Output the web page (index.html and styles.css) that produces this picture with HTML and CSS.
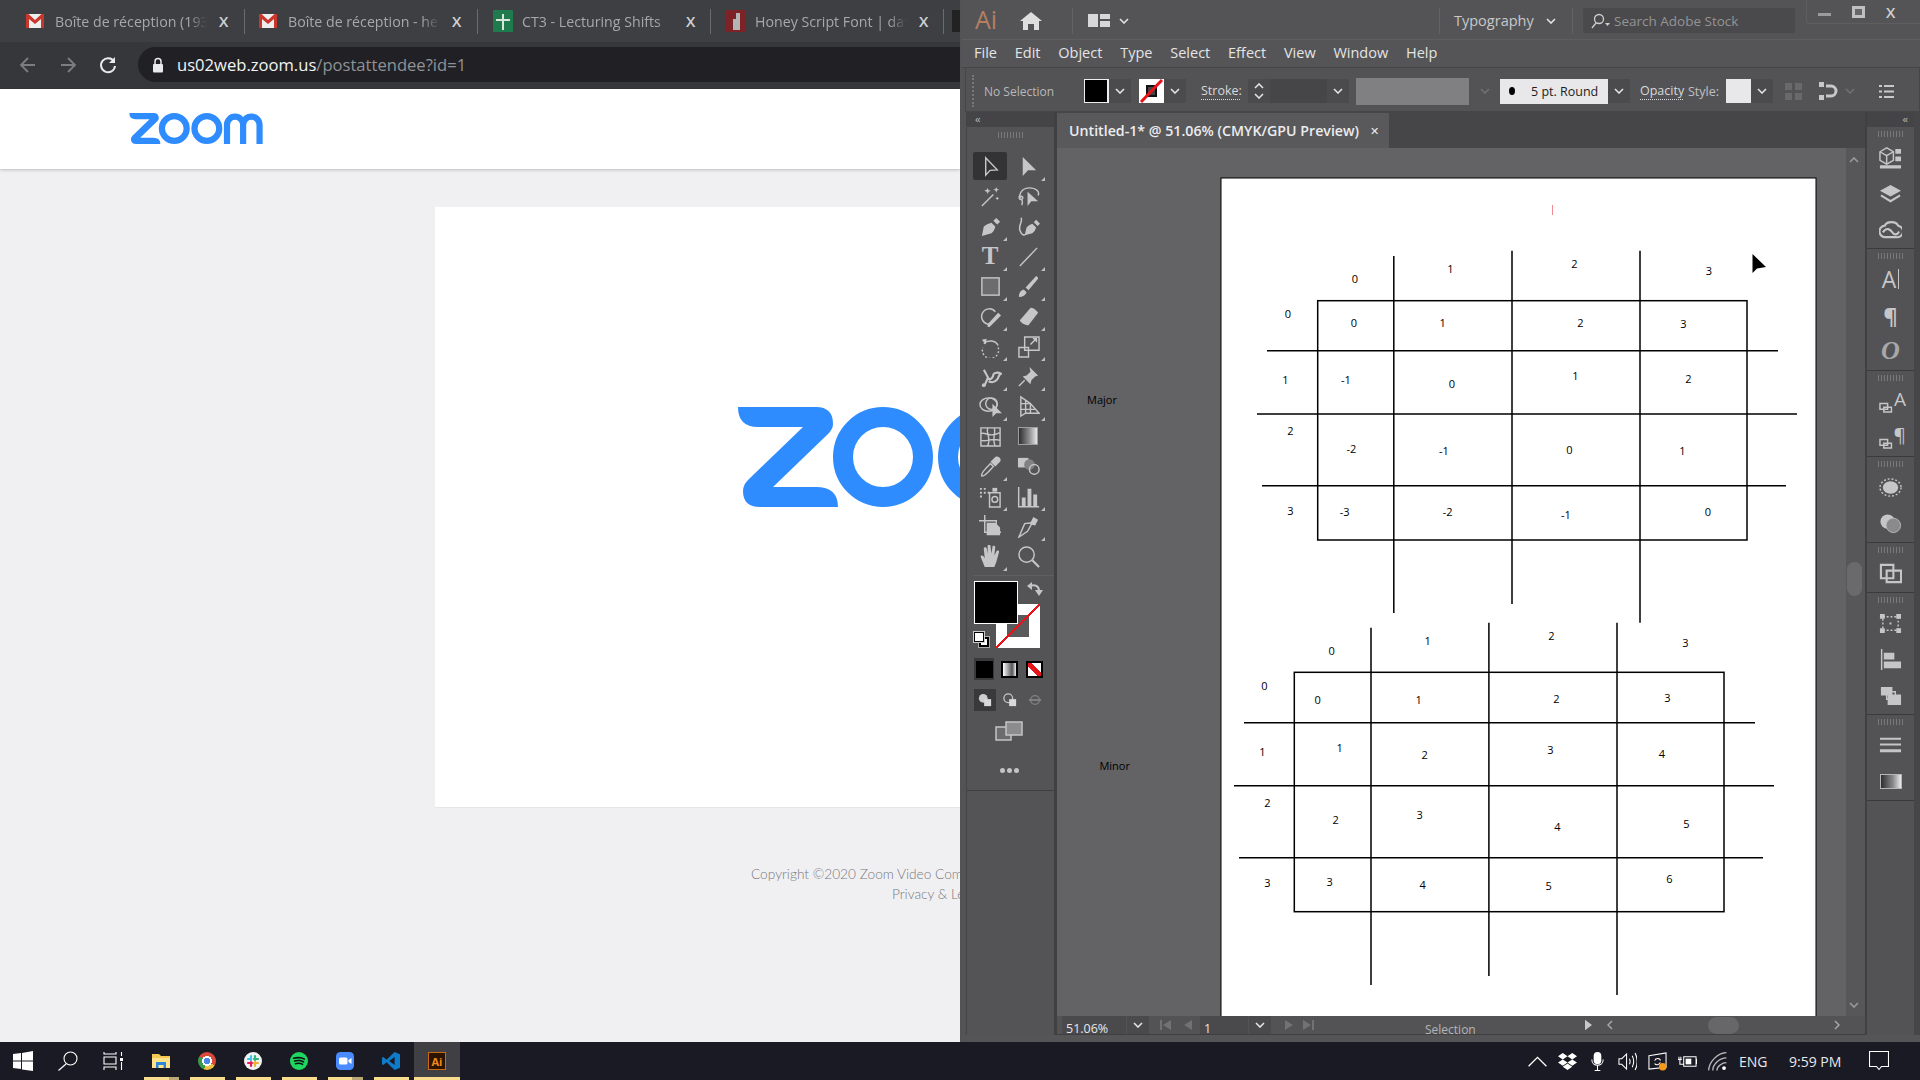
FILE: index.html
```html
<!DOCTYPE html>
<html lang="en">
<head>
<meta charset="utf-8">
<title>Zoom and Illustrator</title>
<link rel="stylesheet" href="styles.css">
</head>
<body>
<div class="desktop">
  <section class="browser">
    <div class="tabs">
      <div class="tab"><svg class="fav" viewBox="0 0 18 14"><rect width="18" height="14" fill="#eee"/><path d="M0 0h2.500L9 6l6.500-6H18v14h-3V5L9 10 3 5v9H0z" fill="#c9372c"/></svg><span class="tab-title">Boîte de réception (193</span><span class="tab-x">X</span></div>
      <div class="tab"><svg class="fav" viewBox="0 0 18 14"><rect width="18" height="14" fill="#eee"/><path d="M0 0h2.500L9 6l6.500-6H18v14h-3V5L9 10 3 5v9H0z" fill="#c9372c"/></svg><span class="tab-title">Boîte de réception - he</span><span class="tab-x">X</span></div>
      <div class="tab"><svg class="fav fav-tall" viewBox="0 0 20 22"><rect width="20" height="22" rx="1" fill="#1f7a4d"/><path d="M9 4h2v5h6v2h-6v9H9v-9H3V9h6z" fill="#d9e6dc"/></svg><span class="tab-title">CT3 - Lecturing Shifts</span><span class="tab-x">X</span></div>
      <div class="tab"><svg class="fav fav-tall" viewBox="0 0 20 22"><rect width="20" height="22" fill="#7d2226"/><path d="M7 9h3V3h4v17H7z" fill="#b4b4b4"/></svg><span class="tab-title">Honey Script Font | daf</span><span class="tab-x">X</span></div>
      <span class="tab-next"></span>
    </div>
    <div class="toolbar">
      <svg class="nav-icon" viewBox="0 0 20 20"><path d="M17 10H4M10 3l-7 7 7 7" class="nav-dim"/></svg>
      <svg class="nav-icon" viewBox="0 0 20 20"><path d="M3 10h13M10 3l7 7-7 7" class="nav-dim"/></svg>
      <svg class="nav-icon" viewBox="0 0 20 20"><path d="M16 6.500A7 7 0 1 0 17 11" class="nav-on"/><path d="M17 2v6h-6z" class="nav-fill"/></svg>
      <div class="omnibox">
        <svg class="lock" viewBox="0 0 12 16"><path d="M3 7V4.500a3 3 0 0 1 6 0V7" class="lock-arc"/><rect x="1" y="7" width="10" height="8.500" rx="1" fill="#e8eaed"/></svg>
        <span class="url"><b>us02web.zoom.us</b>/postattendee?id=1</span>
      </div>
    </div>
    <header class="zoom-head">
      <svg class="logo-small" viewBox="0 0 430 100"><use href="#zoom-logo"/></svg>
    </header>
    <main class="zoom-page">
      <div class="zoom-card">
        <svg class="logo-big" viewBox="0 0 440 100"><g id="zoom-logo"><path class="zoom-fill" d="M0 0H78Q95 0 95 17Q95 22 90 27L35 80H78Q100 80 100 100H22Q5 100 5 84Q5 78 10 73L65 20H20Q0 20 0 0Z"/><circle class="zoom-ring" cx="145" cy="50" r="40"/><circle class="zoom-ring" cx="250" cy="50" r="40"/><path class="zoom-m" d="M315 100V38a20 20 0 0 1 52 0V100M367 38a20 20 0 0 1 53 0V100"/></g></svg>
      </div>
      <footer class="zoom-foot">
        <p>Copyright ©2020 Zoom Video Com</p>
        <p class="foot-legal">Privacy &amp; Le</p>
      </footer>
    </main>
  </section>

  <section class="ai">
    <div class="ai-title">
      <span class="ai-mark">Ai</span>
      <svg class="home" viewBox="0 0 22 18"><path d="M11 0l11 9h-3v9h-5v-6H8v6H3V9H0z"/></svg>
      <span class="title-sep title-sep-a"></span>
      <svg class="layout" viewBox="0 0 22 13"><path d="M0 0h10v13H0zM12 0h10v5H12zM12 7h10v6H12z"/></svg>
      <svg class="chev chev-layout" viewBox="0 0 10 6"><path d="M1 1l4 4 4-4"/></svg>
      <span class="title-sep title-sep-b"></span>
      <span class="workspace-name">Typography</span>
      <svg class="chev chev-work" viewBox="0 0 10 6"><path d="M1 1l4 4 4-4"/></svg>
      <span class="title-sep title-sep-c"></span>
      <div class="stock"><svg class="stock-icon" viewBox="0 0 22 16"><circle cx="10" cy="6" r="4.500"/><path d="M7 10l-4 5"/><path class="stock-tri" d="M16 10h5l-2.500 3z"/></svg><span>Search Adobe Stock</span></div>
      <div class="win-ctl">
        <span class="win-min"></span><span class="win-max"></span><span class="win-close">X</span>
      </div>
    </div>
    <nav class="ai-menu"><span>File</span><span>Edit</span><span>Object</span><span>Type</span><span>Select</span><span>Effect</span><span>View</span><span>Window</span><span>Help</span></nav>
    <div class="ai-control">
      <span class="ctl-grip"></span>
      <span class="ctl-sel">No Selection</span>
      <span class="swatch swatch-fill"></span>
      <span class="ctl-chev"><svg class="chev" viewBox="0 0 10 6"><path d="M1 1l4 4 4-4"/></svg></span>
      <span class="swatch swatch-stroke"><svg viewBox="0 0 25 24"><rect x="8" y="7" width="9" height="10" fill="#444" stroke="#111" stroke-width="2"/><path d="M2 23L23 1" stroke="#e8141c" stroke-width="3"/></svg></span>
      <span class="ctl-chev"><svg class="chev" viewBox="0 0 10 6"><path d="M1 1l4 4 4-4"/></svg></span>
      <span class="ctl-label ctl-stroke">Stroke:</span>
      <span class="stepper"><svg class="chev" viewBox="0 0 10 6"><path d="M1 5l4-4 4 4"/></svg><svg class="chev" viewBox="0 0 10 6"><path d="M1 1l4 4 4-4"/></svg></span>
      <span class="ctl-input"></span>
      <span class="ctl-chev"><svg class="chev" viewBox="0 0 10 6"><path d="M1 1l4 4 4-4"/></svg></span>
      <span class="ctl-gray"></span>
      <span class="ctl-dimchev"><svg class="chev chev-dim" viewBox="0 0 10 6"><path d="M1 1l4 4 4-4"/></svg></span>
      <span class="ctl-round"><i></i><span>5 pt. Round</span></span>
      <span class="ctl-chev"><svg class="chev" viewBox="0 0 10 6"><path d="M1 1l4 4 4-4"/></svg></span>
      <span class="ctl-label ctl-opacity">Opacity</span>
      <span class="ctl-style">Style:</span>
      <span class="swatch swatch-style"></span>
      <span class="ctl-chev"><svg class="chev" viewBox="0 0 10 6"><path d="M1 1l4 4 4-4"/></svg></span>
      <svg class="ctl-gridicon" viewBox="0 0 17 17"><path d="M0 0h7v7H0zM10 0h7v7h-7zM0 10h7v7H0zM10 10h7v7h-7z"/></svg>
      <svg class="ctl-align" viewBox="0 0 20 20"><path d="M0 1h5v5H0zM0 14h5v5H0z"/><path d="M7 5h5a5 5 0 0 1 0 10H7" fill="none" stroke="currentColor" stroke-width="3"/></svg>
      <svg class="chev chev-dim chev-align" viewBox="0 0 10 6"><path d="M1 1l4 4 4-4"/></svg>
      <svg class="ctl-list" viewBox="0 0 15 15"><path d="M0 1h3v2H0zM5 1h10v2H5zM0 6.500h3v2H0zM5 6.500h10v2H5zM0 12h3v2H0zM5 12h10v2H5z"/></svg>
    </div>

    <div class="ai-work">
      <aside class="tools">
        <div class="collapse"><span>‹‹</span></div>
        <div class="grip"></div>
        <div class="tool-grid">
          <span class="tool tool-on"><svg viewBox="0 0 24 24"><path class="ln" d="M7 3v18l4.500-5 7.500-.5z"/></svg></span>
          <span class="tool fly"><svg viewBox="0 0 24 24"><path d="M6 2v20l5.500-6H20z"/></svg></span>
          <span class="tool"><svg viewBox="0 0 24 24"><path class="ln" d="M3 22L15 10"/><path d="M9 3l1 2.500L12.500 6 10 7 9 9.500 8 7 5.500 6 8 5zM18 2l.8 2.200L21 5l-2.200.8L18 8l-.8-2.200L15 5l2.200-.8zM19 12l.6 1.400L21 14l-1.400.6L19 16l-.6-1.400L17 14l1.400-.6z"/></svg></span>
          <span class="tool"><svg viewBox="0 0 24 24"><path class="ln" d="M4 14c-3-5 2-11 9-11s11 4 9 8"/><path class="ln" d="M3 11c-2 2 0 5 2 4s1-4-1-3M5 15c1 2 1 4 0 6"/><path d="M11 7v15l4-5h7z"/></svg></span>
          <span class="tool fly"><svg viewBox="0 0 24 24"><path d="M3 22L5 12Q8 9 13 8L17 12Q16 17 13 19ZM15 6L18 3L22 7L19 10Z"/></svg></span>
          <span class="tool"><svg viewBox="0 0 24 24"><path d="M8 21L10 13Q12 10 16 9L20 13Q19 17 16 19ZM17.500 7.500L20 5L24 9L21.500 11.500Z"/><path class="ln" d="M4 3c3 3-3 7-1 13s5 5 6 4"/></svg></span>
          <span class="tool fly"><span class="tool-t">T</span></span>
          <span class="tool fly"><svg viewBox="0 0 24 24"><path class="ln" d="M3 22L21 3"/></svg></span>
          <span class="tool fly"><svg viewBox="0 0 24 24"><rect class="ln rect-fill" x="3" y="3" width="18" height="18"/></svg></span>
          <span class="tool fly"><svg viewBox="0 0 24 24"><path d="M2 23c0-5 2-7 5-8l3 3c-1 3-4 5-8 5zM9 13L20 1c2 1 2 2 2 3L12 16z"/></svg></span>
          <span class="tool fly"><svg viewBox="0 0 24 24"><path class="ln" d="M11 20a8 8 0 1 1 6-13"/><path d="M9 20L20 8l3 3-12 12H9z"/></svg></span>
          <span class="tool fly"><svg viewBox="0 0 24 24"><path d="M3 16L14 3c2-1 7 3 8 5L12 21c-2 1-8-2-9-5z"/></svg></span>
          <span class="tool fly"><svg viewBox="0 0 24 24"><path class="ln ln-dash" d="M20 13a8.500 8.500 0 1 1-16 0"/><path class="ln" d="M5 9a9 8 0 0 1 15 2"/><path d="M3 5l5-1-1 6z"/></svg></span>
          <span class="tool fly"><svg viewBox="0 0 24 24"><path class="ln" d="M2 13h10v10H2zM8 2h15v14H8z"/><path class="ln" d="M14 10l6-6"/><path d="M16 3h5v5z"/></svg></span>
          <span class="tool fly"><svg viewBox="0 0 24 24"><path class="ln ln-thick" d="M5 5c2 3 3 6 5 9M6 21l3-7c3 2 6-1 6-4 1-2 4-3 8-1-3 1-2 4-4 6-3 4-7 3-9 2"/><circle cx="5" cy="21" r="2"/></svg></span>
          <span class="tool fly"><svg viewBox="0 0 24 24"><path d="M13 2l9 9-3 1-4 4-1 4-8-8 4-1 4-4z"/><path class="ln" d="M8 16l-6 6"/></svg></span>
          <span class="tool fly"><svg viewBox="0 0 24 24"><ellipse class="ln" cx="10" cy="10" rx="9" ry="7"/><circle class="ln" cx="13" cy="9" r="6"/><path d="M14 9v14l4-4h6z"/></svg></span>
          <span class="tool fly"><svg viewBox="0 0 24 24"><path class="ln" d="M4 2v20l5-3h14L14 9 4 2zM9 6v13M14 9v10M4 9h10M4 15h15"/></svg></span>
          <span class="tool"><svg viewBox="0 0 24 24"><path class="ln" d="M2 3h20v19H2zM2 9c6-2 8 5 20-1M2 16c7 2 10-3 20 0M9 3c-2 6 4 10 0 19M16 3c2 7-3 11 1 19"/></svg></span>
          <span class="tool"><span class="tool-gradient"></span></span>
          <span class="tool fly"><svg viewBox="0 0 24 24"><path class="ln" d="M3 22c-2-3 7-11 9-13l3 3c-2 2-9 11-12 10z"/><path d="M12 7l5-5c3-2 7 2 5 5l-5 5z"/></svg></span>
          <span class="tool"><svg viewBox="0 0 24 24"><path d="M1 3h11v10H1z"/><circle cx="13" cy="10" r="5.500" fill="#818183"/><circle class="ln" cx="18" cy="15" r="5"/></svg></span>
          <span class="tool fly"><svg viewBox="0 0 24 24"><path d="M1 3h2v2H1zM5 3h2v2H5zM1 7h2v2H1zM5 7h2v2H5zM1 11h2v2H1zM9 7h2v2H9z"/><path class="ln" d="M11 8h11v15H11z"/><path d="M14 3h5v4h-5z"/><circle class="ln" cx="16.500" cy="15" r="3"/></svg></span>
          <span class="tool fly"><svg viewBox="0 0 24 24"><path d="M1 2h1.500v20H23v1.500H1zM5 13h4v9H5zM11 4h4v18h-4zM17 10h4v12h-4z"/></svg></span>
          <span class="tool"><svg viewBox="0 0 24 24"><path class="ln" d="M6 0v18h17M0 6h18v6"/><path d="M8 8h9l5 5v8H8z"/></svg></span>
          <span class="tool fly"><svg viewBox="0 0 24 24"><path class="ln" d="M2 23L8 9 16 8 11 17z"/><path d="M14 8l3-6 5 3-3 6-5-1z"/></svg></span>
          <span class="tool fly"><svg viewBox="0 0 24 24"><path d="M6 23L2 13c-1-2 1-3 3-1l1 2-1-10c0-2 2-2 3-1l1 6V1c0-2 3-2 3 0l1 8 1-7c0-2 3-1 3 0l-1 9 2-4c1-2 3-1 3 0l-3 11-2 5z"/></svg></span>
          <span class="tool"><svg viewBox="0 0 24 24"><circle class="ln" cx="10" cy="10" r="8"/><path class="ln ln-thick" d="M16 16l7 7"/></svg></span>
        </div>
        <div class="swatches">
          <span class="big-fill"></span>
          <span class="big-stroke"></span>
          <svg class="swap" viewBox="0 0 16 16"><path class="ln-bold" d="M3 5c5-2 9 0 9 5"/><path d="M0 5l5-4v8zM8 9h8l-4 6z"/></svg>
          <span class="mini-stroke"></span><span class="mini-fill"></span>
        </div>
        <div class="mode-row">
          <span class="mode-cell mode-on"><i class="mode-black"></i></span>
          <span class="mode-cell"><i class="mode-grad"></i></span>
          <span class="mode-cell"><i class="mode-none"></i></span>
        </div>
        <div class="draw-row">
          <span class="draw-cell draw-on"><svg viewBox="0 0 16 16"><circle cx="6" cy="6" r="5"/><path class="draw-sq" d="M7 7h8v8H7z"/></svg></span>
          <span class="draw-cell"><svg viewBox="0 0 16 16"><circle class="ln" cx="6" cy="6" r="5"/><path class="draw-sq" d="M7 7h8v8H7z"/></svg></span>
          <span class="draw-cell draw-dim"><svg viewBox="0 0 16 16"><circle class="ln" cx="8" cy="8" r="5"/><path d="M1 7h14v2H1z"/></svg></span>
        </div>
        <svg class="screen-mode" viewBox="0 0 28 20"><path class="screen-back" d="M1 6h15v13H1z"/><path d="M11 1h16v13H11z" class="screen-front"/></svg>
        <div class="dots"><i></i><i></i><i></i></div>
      </aside>

      <div class="doc">
        <div class="doc-tabs"><div class="doc-tab"><span>Untitled-1* @ 51.06% (CMYK/GPU Preview)</span><b>✕</b></div></div>
        <div class="doc-main">
          <div class="canvas">
            <svg class="drawing" viewBox="1057 148 788 868">
              <rect class="board" x="1221" y="178" width="595" height="860"/>
              <path class="pink" d="M1552.500 205v10"/>
              <g class="lines">
                <rect x="1317.700" y="300.700" width="429.300" height="239.300"/>
                <path d="M1393.800 256V613M1512 250.700V604M1640 250.700V622.700M1267 350.700H1778M1257 414H1797M1262 485.700H1786"/>
                <rect x="1294.300" y="672.300" width="429.700" height="239.400"/>
                <path d="M1371 627.700V985M1488.900 622.700V976M1617 622.700V995M1244 722.700H1755M1234 785.700H1774M1239 857.700H1763"/>
              </g>
              <path class="cursor" d="M1752.500 254V273L1757 268.500L1766 267Z"/>
              <g class="nums">
                <text x="1355" y="283">0</text><text x="1450.500" y="273">1</text><text x="1574.400" y="268">2</text><text x="1708.800" y="275">3</text>
                <text x="1288" y="318">0</text><text x="1285.400" y="384">1</text><text x="1290.300" y="435">2</text><text x="1290.300" y="515">3</text>
                <text x="1354" y="327">0</text><text x="1442.600" y="327">1</text><text x="1580.400" y="327">2</text><text x="1683.400" y="328">3</text>
                <text x="1346" y="384">-1</text><text x="1452" y="388">0</text><text x="1575.400" y="380">1</text><text x="1688.400" y="383">2</text>
                <text x="1351.500" y="453">-2</text><text x="1444" y="455">-1</text><text x="1569.500" y="454">0</text><text x="1682.400" y="455">1</text>
                <text x="1344.600" y="516">-3</text><text x="1447.600" y="516">-2</text><text x="1566" y="519">-1</text><text x="1707.800" y="516">0</text>
                <text x="1331.600" y="655">0</text><text x="1427.700" y="645">1</text><text x="1551.500" y="640">2</text><text x="1685.400" y="647">3</text>
                <text x="1264.500" y="690">0</text><text x="1262.500" y="756">1</text><text x="1267.500" y="807">2</text><text x="1267.500" y="887">3</text>
                <text x="1317.700" y="704">0</text><text x="1418.700" y="704">1</text><text x="1556.500" y="703">2</text><text x="1667.500" y="702">3</text>
                <text x="1339.600" y="752">1</text><text x="1424.700" y="759">2</text><text x="1550.500" y="754">3</text><text x="1662" y="758">4</text>
                <text x="1335.600" y="824">2</text><text x="1419.700" y="819">3</text><text x="1557.500" y="831">4</text><text x="1686.400" y="828">5</text>
                <text x="1329.700" y="886">3</text><text x="1422.700" y="889">4</text><text x="1548.600" y="890">5</text><text x="1669.500" y="883">6</text>
                <text x="1102" y="404">Major</text><text x="1114.700" y="770">Minor</text>
              </g>
            </svg>
          </div>
          <div class="vscroll">
            <svg class="chev" viewBox="0 0 10 6"><path d="M1 5l4-4 4 4"/></svg>
            <span class="vthumb"></span>
            <svg class="chev" viewBox="0 0 10 6"><path d="M1 1l4 4 4-4"/></svg>
          </div>
        </div>
        <div class="status">
          <span class="st-zoom">51.06%</span>
          <span class="st-chev"><svg class="chev" viewBox="0 0 10 6"><path d="M1 1l4 4 4-4"/></svg></span>
          <svg class="st-nav" viewBox="0 0 40 12"><path d="M3 1h2v10H3zM14 1v10L6 6zM35 1v10l-8-5z"/></svg>
          <span class="st-page">1</span>
          <span class="st-chev"><svg class="chev" viewBox="0 0 10 6"><path d="M1 1l4 4 4-4"/></svg></span>
          <svg class="st-nav st-nav-b" viewBox="0 0 40 12"><path d="M2 1v10l8-5zM20 1v10l8-5zM29 1h2v10h-2z"/></svg>
          <span class="st-tool">Selection</span>
          <svg class="st-play" viewBox="0 0 8 12"><path d="M0 0v12l8-6z"/></svg>
          <div class="hscroll"><svg class="chev-side" viewBox="0 0 6 10"><path d="M5 1L1 5l4 4"/></svg><span class="hthumb"></span><svg class="chev-side" viewBox="0 0 6 10"><path d="M1 1l4 4-4 4"/></svg></div>
        </div>
      </div>

      <aside class="dock">
        <div class="collapse collapse-r"><span>‹‹</span></div>
        <div class="dock-group"><span class="grip"></span>
          <span class="dock-i"><svg viewBox="0 0 24 24"><path d="M1 6l7-4 7 4v9l-7 4-7-4z" class="ln"/><path d="M1 6l7 4 7-4M8 10v9" class="ln"/><path d="M17 3h6v5h-6zM17 11h6v5h-6zM1 20h22v3.500H1z"/></svg></span>
          <span class="dock-i"><svg viewBox="0 0 24 24"><path d="M12 3l11 6-11 6L1 9z"/><path class="ln ln-thick" d="M2 14l10 6 10-6"/></svg></span>
          <span class="dock-i"><svg viewBox="0 0 24 24"><path class="ln ln-thick" d="M7 20a6 6 0 0 1-1-12c2-5 12-5 14 0a6 6 0 0 1-2 12zM4 15c4-6 8-3 10 0s5 3 7-1"/></svg></span>
        </div>
        <div class="dock-group"><span class="grip"></span>
          <span class="dock-i"><span class="dock-a">A<i></i></span></span>
          <span class="dock-i"><span class="dock-p">¶</span></span>
          <span class="dock-i"><span class="dock-o">O</span></span>
        </div>
        <div class="dock-group"><span class="grip"></span>
          <span class="dock-i"><svg viewBox="0 0 24 24"><path class="ln" d="M1 14h8v6H1zM5 18h8v5H5z"/></svg><span class="dock-a2">A</span></span>
          <span class="dock-i"><svg viewBox="0 0 24 24"><path class="ln" d="M1 14h8v6H1zM5 18h8v5H5z"/></svg><span class="dock-p2">¶</span></span>
        </div>
        <div class="dock-group"><span class="grip"></span>
          <span class="dock-i"><svg viewBox="0 0 24 24"><ellipse class="ln ln-dash" cx="12" cy="12" rx="11" ry="9"/><ellipse cx="12" cy="12" rx="8" ry="6.500"/></svg></span>
          <span class="dock-i"><svg viewBox="0 0 24 24"><circle cx="9" cy="10" r="7.500"/><circle cx="15" cy="14" r="7.500" fill="#8a8a8c" stroke="#b6b6b8"/></svg></span>
        </div>
        <div class="dock-group"><span class="grip"></span>
          <span class="dock-i"><svg viewBox="0 0 24 24"><path class="ln ln-thick" d="M2 3h13v14H2zM8 9h15v12H8z"/></svg></span>
        </div>
        <div class="dock-group"><span class="grip"></span>
          <span class="dock-i"><svg viewBox="0 0 24 24"><path class="ln ln-dash" d="M4 5h16v14H4z"/><path d="M1 2h5v5H1zM18 2h5v5h-5zM1 17h5v5H1zM18 17h5v5h-5zM11 11h2v2h-2z"/></svg></span>
          <span class="dock-i"><svg viewBox="0 0 24 24"><path d="M2 1h1.500v22H2zM5 5h11v7H5zM5 14h18v7H5z"/></svg></span>
          <span class="dock-i"><svg viewBox="0 0 24 24"><path d="M2 3h12v9H2zM9 11h14v11H9z"/><path class="ln" d="M8 8h9v8H8z"/></svg></span>
        </div>
        <div class="dock-group"><span class="grip"></span>
          <span class="dock-i"><svg viewBox="0 0 24 24"><path d="M1 4h22v2H1zM1 10h22v2H1zM1 16h22v3H1z"/></svg></span>
          <span class="dock-i"><span class="dock-grad"></span></span>
        </div>
      </aside>
    </div>
    <div class="ai-foot"></div>
  </section>

  <footer class="taskbar">
    <span class="task"><svg class="task-sys" viewBox="0 0 20 20"><path d="M0 3l8-1v7.500H0zM9 2l11-2v9.500H9zM0 10.500h8V18l-8-1zM9 10.500h11V20L9 18.500z" fill="#fff"/></svg></span>
    <span class="task"><svg class="task-sys" viewBox="0 0 20 20"><circle cx="12.500" cy="7.500" r="6.500" class="ln-w"/><path d="M8 13l-7.500 6.500" class="ln-w"/></svg></span>
    <span class="task"><svg class="task-sys" viewBox="0 0 20 20"><path class="ln-w" d="M1 1v2h12V1M1 6h12v7H1zM1 19v-3h12v3M18.500 1v4M18.500 11v8"/><path d="M17 7h3v3h-3z" fill="#fff"/></svg></span>
    <div class="apps">
      <span class="app app-two"><svg viewBox="0 0 18 18"><path d="M0 2h7l2 2h9v12H0z" fill="#f5c851"/><path d="M0 6h18v10H0z" fill="#ffe28a"/><path d="M4 10h10v6h-2.500v-3h-5v3H4z" fill="#2b88d8"/></svg></span>
      <span class="app"><span class="chrome"></span></span>
      <span class="app"><svg viewBox="0 0 18 18"><circle cx="9" cy="9" r="9" fill="#f3f3f3"/><path d="M7 4v4" class="sl" stroke="#36c5f0"/><path d="M11 4v4" class="sl" stroke="#2eb67d"/><path d="M4 11h4" class="sl" stroke="#e01e5a"/><path d="M10 7h4" class="sl" stroke="#2eb67d"/><path d="M10 11h4" class="sl" stroke="#ecb22e"/><path d="M7 10v4" class="sl" stroke="#e01e5a"/><path d="M11 10v4" class="sl" stroke="#ecb22e"/><path d="M4 7h3" class="sl" stroke="#36c5f0"/></svg></span>
      <span class="app"><svg viewBox="0 0 20 20"><circle cx="10" cy="10" r="10" fill="#1ed760"/><path d="M4 7c4-1 9-1 12 1M5 10c3-1 8-1 10 1M6 13c3-.7 6-.5 8 .8" fill="none" stroke="#111" stroke-width="1.700" stroke-linecap="round"/></svg></span>
      <span class="app app-two"><svg viewBox="0 0 18 18"><rect width="18" height="18" rx="4.500" fill="#4a8cff"/><rect x="3" y="5.500" width="8.500" height="7" rx="1.500" fill="#fff"/><path d="M12.500 8l3-2v6l-3-2z" fill="#fff"/></svg></span>
      <span class="app"><svg viewBox="0 0 20 20"><path d="M14 0l6 2.500v15L14 20 5 11.500 1.500 14.500 0 13.500V6.500l1.500-1L5 8.500z" fill="#0e7cc8"/><path d="M14 5.500L8 10l6 4.500z" fill="#1a1a24"/></svg></span>
      <span class="app app-ai"><span class="ai-tile">Ai</span></span>
    </div>
    <div class="tray">
      <span class="tray-i"><svg viewBox="0 0 16 9"><path class="ln-w" d="M.5 8.500L8 1l7.500 7.500"/></svg></span>
      <span class="tray-i"><svg viewBox="0 0 18 16"><path d="M4.500 0L9 3 4.500 6 0 3zM13.500 0L18 3l-4.500 3L9 3zM4.500 6L9 9l-4.500 3L0 9zM13.500 6L18 9l-4.500 3L9 9zM4.500 13L9 10l4.500 3L9 16z" fill="#fff"/></svg></span>
      <span class="tray-i"><svg viewBox="0 0 14 20"><rect x="3" y="0" width="8" height="13" rx="4" fill="#fff"/><path class="ln-w" d="M1 8c0 8 12 8 12 0M7 14v5M4 19.500h6"/></svg></span>
      <span class="tray-i"><svg viewBox="0 0 20 20"><path class="ln-w" d="M1 7h3l5-5v16l-5-5H1zM12 7c1 2 1 4 0 6M15 4c2 4 2 8 0 12M18 1c3 6 3 12 0 18"/></svg></span>
      <span class="tray-i"><svg viewBox="0 0 20 20"><path class="ln-w" d="M1 4l18-3v15L1 18z"/><path class="ln-w" d="M7 9c1-3 6-3 6 0M13 11c-1 3-5 3-6 1"/><circle cx="15.500" cy="15.500" r="4" fill="#f79a17"/></svg></span>
      <span class="tray-i"><svg viewBox="0 0 20 14"><path class="ln-w" d="M6 2h13v10H6zM19 5h1v4h-1zM0 5h4M1 2v3M3 2v3M2 5v5h4"/><path d="M8 4h6v6H8z" fill="#fff"/></svg></span>
      <span class="tray-i"><svg viewBox="0 0 16 16"><path class="ln-w ln-soft" d="M.5 15.500C1 8 8 1 15.500 .5M4 15.500C4 10 10 5 15.500 5M7.500 15.500C7.500 12 12 9 15.500 9"/><circle cx="13.500" cy="13.500" r="1.600" fill="#fff"/></svg></span>
      <span class="tray-lang">ENG</span>
      <span class="tray-time">9:59 PM</span>
      <svg class="tray-note" viewBox="0 0 20 20"><path class="ln-w" d="M.5 .5h19v15h-7l-2.500 3-2.500-3h-7z"/></svg>
    </div>
  </footer>
</div>
</body>
</html>
```
FILE: styles.css
```css
* { box-sizing: border-box; }
html, body { margin: 0; height: 100%; }
body { overflow: hidden; font-family: "Open Sans", "Noto Sans", sans-serif; }
svg { display: block; }
p { margin: 0; }

.desktop {
  width: 1920px; height: 1080px; overflow: hidden;
  display: grid; grid-template-columns: 960px 960px; grid-template-rows: 1042px 38px;
}

/* ---------- Browser ---------- */
.browser { display: flex; flex-direction: column; overflow: hidden; background: #f0f0f2; }
.tabs { height: 42px; flex: none; display: flex; align-items: center; padding-left: 12px; background: #3e3f43; }
.tab { width: 233px; height: 25px; flex: none; display: flex; align-items: center; padding-left: 14px; border-right: 1px solid #6a6b6f; color: #a5a8ad; font-size: 14.200px; }
.fav { width: 18px; height: 14px; flex: none; margin-right: 11px; }
.fav-tall { width: 20px; height: 22px; margin-left: 1px; margin-right: 9px; }
.tab-title { width: 152px; flex: none; overflow: hidden; white-space: nowrap; -webkit-mask-image: linear-gradient(90deg, #000 88%, transparent); mask-image: linear-gradient(90deg, #000 88%, transparent); }
.tab-x { margin-left: 12px; color: #d2d3d6; font-size: 15px; font-weight: 600; }
.tab-next { width: 14px; height: 22px; margin-left: 8px; flex: none; background: #222; }

.toolbar { height: 47px; flex: none; display: flex; align-items: center; padding: 0 0 2px 18px; background: #36373b; }
.nav-icon { width: 20px; height: 20px; flex: none; margin-right: 20px; fill: none; }
.nav-dim { stroke: #7b7d82; stroke-width: 1.800; fill: none; }
.nav-on { stroke: #e8eaed; stroke-width: 2; fill: none; }
.nav-fill { fill: #e8eaed; }
.omnibox { flex: 1; height: 35px; margin-left: 0; display: flex; align-items: center; padding-left: 14px; background: #212125; border-radius: 18px 0 0 18px; }
.lock { width: 12px; height: 16px; margin-right: 13px; flex: none; }
.lock-arc { fill: none; stroke: #e8eaed; stroke-width: 1.500; }
.url { color: #8f9297; font-size: 16.600px; font-family: "Open Sans", sans-serif; white-space: nowrap; }
.url b { color: #f1f3f4; font-weight: 400; }

.zoom-head { height: 80px; flex: none; padding: 24px 0 0 127px; background: #fff; box-shadow: 0 1px 3px rgba(0,0,0,.22); position: relative; }
.logo-small { width: 138px; height: 31px; }
.zoom-fill { fill: #2f8cff; }
.zoom-ring { fill: none; stroke: #2f8cff; stroke-width: 20; }
.zoom-m { fill: none; stroke: #2f8cff; stroke-width: 20; }
.zoom-page { flex: 1; min-height: 0; padding: 38px 0 0 435px; overflow: hidden; }
.zoom-card { width: 560px; height: 601px; padding: 200px 0 0 303px; background: #fff; border-bottom: 1px solid #e6e6e8; }
.logo-big { width: 440px; height: 100px; overflow: visible; }
.zoom-foot { width: 700px; margin: 56px 0 0 316px; color: #77787c; font-family: Lato, sans-serif; font-weight: 300; font-size: 13.700px; line-height: 20px; white-space: nowrap; }
.foot-legal { margin: 0 0 0 141px; }

/* ---------- Illustrator ---------- */
.ai { display: flex; flex-direction: column; overflow: hidden; background: #535355; color: #dcdcde; padding-left: 2px; }
.ai-title { height: 40px; flex: none; position: relative; display: flex; align-items: center; padding: 2px 0 0 13px; background: #545456; border-bottom: 1px solid #5e5e60; }
.ai-mark { width: 23px; margin-top: -3px; color: #b57f62; font-size: 25px; line-height: 30px; font-weight: 400; font-family: "Open Sans", sans-serif; }
.home { width: 22px; height: 18px; margin-left: 22px; fill: #dededf; }
.title-sep { width: 1px; height: 26px; background: #626264; flex: none; }
.title-sep-a { margin-left: 30px; }
.layout { width: 22px; height: 13px; margin-left: 15px; fill: #d8d8da; }
.chev { width: 10px; height: 6px; flex: none; fill: none; stroke: #e2e2e4; stroke-width: 1.600; }
.chev-layout { margin-left: 9px; }
.title-sep-b { margin-left: 310px; }
.workspace-name { margin-left: 14px; width: 84px; font-size: 14.500px; color: #c8c8ca; white-space: nowrap; }
.chev-work { margin-left: 8px; }
.title-sep-c { margin-left: 16px; }
.stock { width: 212px; height: 25px; margin-left: 10px; display: flex; align-items: center; gap: 3px; padding-left: 6px; background: #4a4a4c; border-radius: 2px; color: #949496; font-size: 13.500px; white-space: nowrap; }
.stock-icon { width: 22px; height: 16px; flex: none; fill: none; stroke: #d0d0d2; stroke-width: 1.300; }
.stock-tri { fill: #d0d0d2; stroke: none; }
.win-ctl { position: absolute; right: 0; top: 0; width: 114px; height: 24px; display: flex; align-items: center; border: 1px solid #5e5e60; border-top: 0; border-right: 0; border-radius: 0 0 0 4px; padding-left: 11px; }
.win-min { width: 13px; height: 3px; margin-top: 5px; background: #9c9c9e; }
.win-max { width: 13px; height: 12px; margin-left: 21px; border: 3px solid #c0c0c2; background: #666; }
.win-close { margin-left: 21px; color: #d0d0d2; font-size: 15px; font-weight: 600; }

.ai-menu { height: 28px; flex: none; display: flex; align-items: center; padding: 0 0 2px 12px; gap: 17.800px; font-size: 14.500px; color: #e4e4e6; background: #555557; border-bottom: 1px solid #444446; }
.ai-control { height: 44px; flex: none; display: flex; align-items: center; margin-left: 3px; padding: 3px 0 0 6px; background: #535355; border: 1px solid #464648; border-top: 0; font-size: 13px; }
.ctl-grip { width: 2px; height: 32px; flex: none; border-left: 2px dotted #77777a; }
.ctl-sel { width: 110px; flex: none; padding-left: 10px; color: #b8b8ba; white-space: nowrap; font-size: 12px; }
.swatch { width: 25px; height: 24px; flex: none; }
.swatch-fill { background: #000; border: 1px solid #eee; border-right-width: 2px; }
.swatch-stroke { margin-left: 8px; background: #fff; }
.swatch-style { margin-left: 8px; background: #e8e8ea; }
.ctl-chev { width: 22px; height: 24px; flex: none; display: flex; align-items: center; justify-content: center; background: #4b4b4d; }
.ctl-label { flex: none; color: #d8d8da; border-bottom: 1px dotted #d8d8da; line-height: 16px; font-size: 12.500px; white-space: nowrap; }
.ctl-stroke { width: 39px; margin-left: 15px; margin-right: 8px; }
.stepper { width: 22px; height: 24px; flex: none; display: flex; flex-direction: column; align-items: center; justify-content: space-around; padding: 2px 0; background: #4b4b4d; }
.ctl-input { width: 57px; height: 24px; flex: none; background: #464648; }
.ctl-gray { width: 113px; height: 27px; margin-left: 7px; flex: none; background: #808082; }
.ctl-dimchev { width: 31px; flex: none; display: flex; justify-content: center; }
.chev-dim { stroke: #707072; }
.ctl-round { width: 108px; height: 25px; flex: none; display: flex; align-items: center; padding-left: 9px; background: #e8e8ea; color: #1c1c1c; font-size: 12.500px; white-space: nowrap; }
.ctl-round i { width: 6px; height: 8px; margin-right: 16px; background: #000; border-radius: 50%; }
.ctl-opacity { width: 43px; margin-left: 10px; }
.ctl-style { width: 30px; flex: none; margin-left: 5px; color: #c0c0c2; font-size: 12.500px; }
.ctl-gridicon { width: 17px; height: 17px; margin-left: 12px; flex: none; fill: #696969; }
.ctl-align { width: 20px; height: 20px; margin-left: 17px; flex: none; color: #c8c8ca; fill: currentColor; }
.chev-align { margin-left: 6px; }
.ctl-list { width: 15px; height: 15px; margin-left: 24px; flex: none; fill: #c8c8ca; }

.ai-work { flex: 1; min-height: 0; display: flex; margin-left: 4px; }
.tools { width: 91px; flex: none; display: flex; flex-direction: column; border-left: 1px solid #454547; border-right: 3px solid #404042; background: #545456; position: relative; }
.tools::after { content: ""; position: absolute; left: 0; right: 0; top: 678px; height: 1px; background: #3e3e40; }
.collapse { height: 15px; flex: none; background: #444446; color: #b8b8ba; font-size: 11px; line-height: 13px; padding-left: 8px; letter-spacing: -1px; }
.collapse-r { text-align: right; padding: 0 7px 0 0; }
.grip { display: block; width: 26px; height: 6px; margin: 5px auto 0; background: repeating-linear-gradient(90deg, #79797b 0 1px, transparent 1px 3px); }
.tool-grid { display: grid; grid-template-columns: 38px 38px; grid-auto-rows: 30px; margin: 14px 0 0 6px; padding-bottom: 3px; border-bottom: 1px solid #5f5f61; }
.tool { width: 34px; height: 28px; display: flex; align-items: center; justify-content: center; position: relative; color: #c6c6c8; }
.tool svg { width: 23px; height: 23px; fill: #c6c6c8; }
.tool-on { background: #333335; border-radius: 2px; }
.fly::after { content: ""; position: absolute; right: 0; bottom: -1px; border: 2.500px solid transparent; border-right-color: #bdbdbf; border-bottom-color: #bdbdbf; }
.ln { fill: none; stroke: #c6c6c8; stroke-width: 1.500; }
.ln-thick { stroke-width: 2.200; }
.ln-dash { stroke-dasharray: 2 2; }
.rect-fill { fill: #6c6c6e; }
.tool-t { font-family: "Liberation Serif", serif; font-weight: 700; font-size: 25px; line-height: 28px; }
.tool-gradient { width: 20px; height: 18px; background: linear-gradient(90deg, #2e2e30, #8a8a8c 55%, #e6e6e8); border: 1px solid #9e9ea0; }

.swatches { height: 79px; flex: none; position: relative; }
.big-fill { position: absolute; left: 7px; top: 5px; width: 44px; height: 43px; background: #000; border: 1px solid #fff; z-index: 2; }
.big-stroke { position: absolute; left: 29px; top: 28px; width: 44px; height: 44px; background: linear-gradient(to top left, transparent 48%, #e8141c 48% 52%, transparent 52%), linear-gradient(#5a5a5c,#5a5a5c) center/22px 22px no-repeat, #fff; }
.swap { position: absolute; left: 60px; top: 5px; width: 16px; height: 16px; fill: #c4c4c6; }
.ln-bold { fill: none; stroke: #c4c4c6; stroke-width: 2; }
.mini-stroke { position: absolute; left: 12px; top: 61px; width: 10px; height: 10px; background: #fff; border: 2px solid #000; outline: 1px solid #aaa; z-index: 1; }
.mini-fill { position: absolute; left: 7px; top: 56px; width: 10px; height: 10px; background: #fff; border: 1px solid #000; outline: 1px solid #ccc; z-index: 2; }
.mode-row { display: flex; gap: 5px; margin: 3px 0 0 7px; height: 22px; align-items: center; }
.mode-cell { width: 20px; height: 22px; display: flex; align-items: center; justify-content: center; }
.mode-on { background: #3a3a3c; }
.mode-cell i { display: block; width: 17px; height: 17px; border: 2px solid #000; }
.mode-black { background: #000; }
.mode-grad { background: linear-gradient(90deg, #fff, #555 70%, #eee); }
.mode-none { background: linear-gradient(to top right, #fff 38%, #e8141c 38% 62%, #fff 62%); }
.draw-row { display: flex; margin: 9px 0 0 7px; height: 22px; gap: 3px; }
.draw-cell { width: 22px; height: 22px; display: flex; align-items: center; justify-content: center; }
.draw-cell svg { width: 14px; height: 14px; fill: #cdcdcf; }
.draw-on { background: #39393b; }
.draw-sq { fill: #d8d8da; }
.draw-dim svg { opacity: .4; }
.screen-mode { width: 28px; height: 20px; margin: 10px 0 0 28px; }
.screen-back { fill: #6c6c6e; stroke: #c4c4c6; stroke-width: 1.500; }
.screen-front { fill: #8c8c8e; stroke: #c4c4c6; stroke-width: 1.500; }
.dots { display: flex; gap: 2px; margin: 27px 0 0 33px; }
.dots i { width: 5px; height: 5px; background: #c4c4c6; border-radius: 50%; }

.doc { flex: 1; min-width: 0; display: flex; flex-direction: column; }
.doc-tabs { height: 36px; flex: none; display: flex; align-items: flex-end; background: #464648; }
.doc-tab { width: 332px; height: 35px; display: flex; align-items: center; padding-left: 12px; background: #59595b; color: #ececee; font-size: 14.200px; font-weight: 600; white-space: nowrap; }
.doc-tab b { margin-left: 11px; font-size: 11px; font-weight: 400; }
.doc-main { flex: 1; min-height: 0; display: flex; }
.canvas { flex: 1; min-width: 0; position: relative; background: #636365; overflow: hidden; }
.drawing { position: absolute; left: 0; top: 0; width: 788px; height: 868px; }
.board { fill: #fff; stroke: #000; stroke-width: 1; }
.pink { stroke: #f08a94; stroke-width: 1; }
.lines { fill: none; stroke: #000; stroke-width: 1.500; }
.cursor { fill: #000; }
.nums { font-family: "Open Sans", sans-serif; font-size: 11px; text-anchor: middle; fill: #000; }
.vscroll { width: 20px; flex: none; display: flex; flex-direction: column; align-items: center; padding: 9px 4px 8px 0; background: #575759; }
.vthumb { width: 15px; height: 34px; flex: none; margin: 399px 0 auto; background: #6a6a6c; border-radius: 8px; }
.vscroll .chev { stroke: #9a9a9c; }
.status { height: 19px; flex: none; display: flex; align-items: center; background: #535355; color: #e6e6e8; font-size: 12.500px; border-bottom: 1px solid #3f3f41; }
.st-zoom { width: 64px; height: 18px; margin-left: 5px; padding-left: 4px; line-height: 26px; background: #4a4a4c; flex: none; white-space: nowrap; }
.st-chev { width: 22px; height: 18px; flex: none; display: flex; align-items: center; justify-content: center; background: #4a4a4c; margin-left: 1px; }
.st-nav { width: 40px; height: 12px; margin: 0 3px 0 8px; flex: none; fill: #727274; }
.st-page { width: 48px; height: 18px; padding-left: 4px; line-height: 26px; background: #4a4a4c; flex: none; }
.st-nav-b { margin: 0 0 0 12px; }
.st-tool { width: 60px; margin-left: 102px; padding-top: 10px; line-height: 18px; height: 28px; color: #b4b4b6; flex: none; font-size: 12px; }
.st-play { width: 7px; height: 12px; margin-left: 100px; flex: none; fill: #c8c8ca; }
.hscroll { width: 233px; margin-left: 15px; flex: none; display: flex; align-items: center; }
.chev-side { width: 6px; height: 10px; flex: none; fill: none; stroke: #a8a8aa; stroke-width: 1.500; }
.hthumb { width: 31px; height: 17px; margin: 0 auto 0 95px; background: #676769; border-radius: 9px; }

.dock { width: 55px; flex: none; display: flex; flex-direction: column; border-left: 2px solid #404042; border-right: 6px solid #464648; background: #535355; margin-left: -1px; }
.dock-group { padding-bottom: 1px; border-bottom: 1px solid #3a3a3c; }
.dock-group .grip { margin: 4px auto 2px; }
.dock-i { height: 36px; display: flex; align-items: center; justify-content: center; position: relative; color: #c6c6c8; }
.dock-i svg { width: 23px; height: 23px; fill: #c6c6c8; }
.dock-a { font-size: 23px; line-height: 24px; display: flex; align-items: center; font-family: "Open Sans", sans-serif; }
.dock-a i { width: 1px; height: 20px; margin-left: 2px; background: #c6c6c8; }
.dock-p { font-size: 22px; font-weight: 700; font-family: "Open Sans", sans-serif; }
.dock-o { font-family: "Liberation Serif", serif; font-style: italic; font-weight: 700; font-size: 26px; color: #a8a8aa; }
.dock-a2, .dock-p2 { position: absolute; right: 8px; top: 5px; font-size: 19px; line-height: 22px; }
.dock-grad { width: 22px; height: 15px; background: linear-gradient(90deg, #2e2e30, #8a8a8c 60%, #ececee); border: 1px solid #b6b6b8; }
.ai-foot { height: 7px; flex: none; background: #555557; }

/* ---------- Taskbar ---------- */
.taskbar { grid-column: 1 / 3; display: flex; align-items: center; background: #1a1a24; }
.task { width: 45px; height: 38px; flex: none; display: flex; align-items: center; justify-content: center; }
.task-sys { width: 20px; height: 20px; }
.ln-w { fill: none; stroke: #fff; stroke-width: 1.100; }
.ln-soft { stroke: #bbb; }
.apps { display: flex; margin-left: 3px; height: 38px; }
.app { width: 46px; height: 38px; flex: none; display: flex; align-items: center; justify-content: center; position: relative; }
.app svg { width: 18px; height: 18px; }
.app::after { content: ""; position: absolute; left: 6px; right: 5px; bottom: 0; height: 3px; background: #f7dd8c; }
.app-two::after { background: linear-gradient(90deg, #f7dd8c 70%, #b8a976 70%); }
.app-ai { background: #3f3f44; }
.app-ai::after { left: 0; right: 0; }
.ai-tile { width: 18px; height: 18px; display: flex; align-items: center; justify-content: center; background: #2b1402; border: 1.500px solid #c86a10; color: #f08a18; font-size: 11px; font-weight: 700; }
.chrome { width: 18px; height: 18px; border-radius: 50%; background: radial-gradient(circle, #4a86e8 0 3.500px, #fff 3.500px 5px, transparent 5px), conic-gradient(#d94a3a 0 120deg, #f0c040 120deg 200deg, #3a9a4a 200deg 300deg, #d94a3a 300deg); }
.sl { stroke-width: 2.200; stroke-linecap: round; fill: none; }
.tray { margin-left: auto; display: flex; align-items: center; padding-right: 31px; color: #e8e8ea; }
.tray-i { width: 30px; display: flex; justify-content: center; flex: none; }
.tray-i svg { width: 19px; height: 19px; }
.tray-lang { margin-left: 7px; width: 50px; font-size: 14px; white-space: nowrap; }
.tray-time { width: 80px; font-size: 14px; white-space: nowrap; }
.tray-note { width: 20px; height: 20px; flex: none; }
```
